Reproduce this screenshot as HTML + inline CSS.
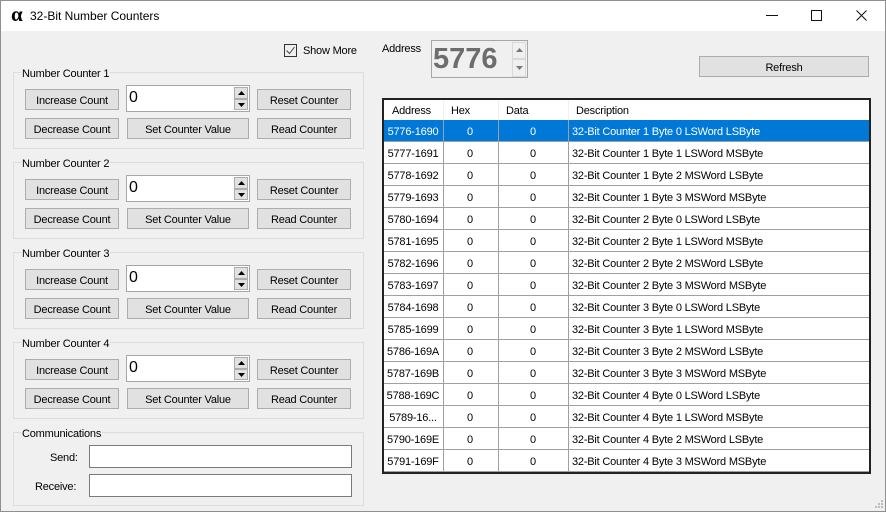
<!DOCTYPE html>
<html><head><meta charset="utf-8">
<style>
html,body{margin:0;padding:0;background:#fff}
#w{position:relative;width:886px;height:512px;overflow:hidden;background:#f0f0f0;font:11px/14px "Liberation Sans",sans-serif;letter-spacing:-.2px;color:#000}
#w div,#w span,#w svg{position:absolute}
.frame{left:0;top:0;width:884px;height:510px;border:1px solid #8f8f8f;box-sizing:content-box}
.tb{left:1px;top:1px;width:884px;height:30px;background:#fff}
.g{left:13px;width:349px;border:1px solid #dcdcdc;box-sizing:content-box}
.l{background:#f0f0f0;padding:0 1px;white-space:nowrap;line-height:14px;margin-top:1px}
.b{box-sizing:border-box;height:21px;border:1px solid #adadad;background:#e1e1e1;text-align:center;line-height:22px;white-space:nowrap}
.n{box-sizing:border-box;left:126px;width:124px;height:27px;border:1px solid #a6a6a6;background:#fff}
.n0{left:2px;top:3px;font-size:16px;line-height:18px;letter-spacing:0}
.s{box-sizing:border-box;left:107px;width:14px;border:1px solid #adadad;background:#e1e1e1}
.s svg{left:3px;top:3px}
.t{box-sizing:border-box;left:89px;width:263px;height:23px;border:1px solid #7a7a7a;background:#fff}
.tab{left:382px;top:98px;width:489px;height:376px;border:2px solid #222;box-sizing:border-box;background:#fff}
.h{top:4px;white-space:nowrap}
.ch{top:0;width:1px;height:20px;background:#f0f0f0}
.cv{top:20px;width:1px;height:352px;background:#a0a0a0}
.r{left:0;width:485px;height:22px;border-bottom:1px solid #a0a0a0;box-sizing:border-box;white-space:nowrap}
.a{left:-1px;width:60px;text-align:center;top:5px}
.x{left:58px;width:56px;text-align:center;top:5px}
.d{left:114px;width:70px;text-align:center;top:5px}
.e{left:188px;top:5px}
.sel{background:#0078d7;color:#fff}
</style></head><body>
<div id="w">
<div class="tb"></div>
<div class="frame"></div>
<div style="left:11px;top:3px;font:bold 21px/22px 'Liberation Serif',serif;letter-spacing:0">α</div>
<div style="left:30px;top:9px;font-size:12px;letter-spacing:0">32-Bit Number Counters</div>
<svg style="left:766px;top:14px" width="12" height="2"><rect width="12" height="1" y="1" fill="#111"/></svg>
<svg style="left:811px;top:10px" width="11" height="11"><rect x=".5" y=".5" width="10" height="10" fill="none" stroke="#111"/></svg>
<svg style="left:856px;top:10px" width="11" height="11"><path d="M.5.5l10 10M10.5.5l-10 10" stroke="#111" fill="none"/></svg>

<svg style="left:284px;top:44px" width="14" height="14"><rect x=".5" y=".5" width="12" height="12" fill="#f0f0f0" stroke="#333"/><path d="M2.5 6.5l3 3 5-6.5" fill="none" stroke="#444"/></svg>
<div style="left:303px;top:44px">Show More</div>
<div style="left:382px;top:42px">Address</div>

<div style="left:431px;top:40px;width:97px;height:38px;box-sizing:border-box;border:1px solid #a6a6a6;background:#f0f0f0"></div>
<div style="left:433px;top:42px;font:bold 29px/34px 'Liberation Sans',sans-serif;color:#6d6d6d;letter-spacing:0">5776</div>
<div style="left:512px;top:42px;width:14px;height:17px;box-sizing:border-box;border:1px solid #d9d9d9"></div>
<div style="left:512px;top:59px;width:14px;height:18px;box-sizing:border-box;border:1px solid #d9d9d9"></div>
<svg style="left:516px;top:48px" width="7" height="4"><path d="M3.5 0L7 4H0z" fill="#777"/></svg>
<svg style="left:516px;top:66px" width="7" height="4"><path d="M0 0H7L3.5 4z" fill="#777"/></svg>
<div class="b" style="left:699px;top:56px;width:170px">Refresh</div>

<!-- Counter 1 -->
<div class="g" style="top:72px;height:75px"></div><div class="l" style="left:21px;top:66px">Number Counter 1</div>
<div class="b" style="left:25px;top:89px;width:94px">Increase Count</div>
<div class="b" style="left:25px;top:118px;width:94px">Decrease Count</div>
<div class="b" style="left:127px;top:118px;width:122px">Set Counter Value</div>
<div class="b" style="left:257px;top:89px;width:94px">Reset Counter</div>
<div class="b" style="left:257px;top:118px;width:94px">Read Counter</div>
<div class="n" style="top:85px"><span class="n0">0</span><div class="s" style="top:1px;height:12px"><svg width="7" height="4"><path d="M3.5 0L7 4H0z"/></svg></div><div class="s" style="top:13px;height:11px"><svg width="7" height="4"><path d="M0 0H7L3.5 4z"/></svg></div></div>

<!-- Counter 2 -->
<div class="g" style="top:162px;height:75px"></div><div class="l" style="left:21px;top:156px">Number Counter 2</div>
<div class="b" style="left:25px;top:179px;width:94px">Increase Count</div>
<div class="b" style="left:25px;top:208px;width:94px">Decrease Count</div>
<div class="b" style="left:127px;top:208px;width:122px">Set Counter Value</div>
<div class="b" style="left:257px;top:179px;width:94px">Reset Counter</div>
<div class="b" style="left:257px;top:208px;width:94px">Read Counter</div>
<div class="n" style="top:175px"><span class="n0">0</span><div class="s" style="top:1px;height:12px"><svg width="7" height="4"><path d="M3.5 0L7 4H0z"/></svg></div><div class="s" style="top:13px;height:11px"><svg width="7" height="4"><path d="M0 0H7L3.5 4z"/></svg></div></div>

<!-- Counter 3 -->
<div class="g" style="top:252px;height:75px"></div><div class="l" style="left:21px;top:246px">Number Counter 3</div>
<div class="b" style="left:25px;top:269px;width:94px">Increase Count</div>
<div class="b" style="left:25px;top:298px;width:94px">Decrease Count</div>
<div class="b" style="left:127px;top:298px;width:122px">Set Counter Value</div>
<div class="b" style="left:257px;top:269px;width:94px">Reset Counter</div>
<div class="b" style="left:257px;top:298px;width:94px">Read Counter</div>
<div class="n" style="top:265px"><span class="n0">0</span><div class="s" style="top:1px;height:12px"><svg width="7" height="4"><path d="M3.5 0L7 4H0z"/></svg></div><div class="s" style="top:13px;height:11px"><svg width="7" height="4"><path d="M0 0H7L3.5 4z"/></svg></div></div>

<!-- Counter 4 -->
<div class="g" style="top:342px;height:75px"></div><div class="l" style="left:21px;top:336px">Number Counter 4</div>
<div class="b" style="left:25px;top:359px;width:94px">Increase Count</div>
<div class="b" style="left:25px;top:388px;width:94px">Decrease Count</div>
<div class="b" style="left:127px;top:388px;width:122px">Set Counter Value</div>
<div class="b" style="left:257px;top:359px;width:94px">Reset Counter</div>
<div class="b" style="left:257px;top:388px;width:94px">Read Counter</div>
<div class="n" style="top:355px"><span class="n0">0</span><div class="s" style="top:1px;height:12px"><svg width="7" height="4"><path d="M3.5 0L7 4H0z"/></svg></div><div class="s" style="top:13px;height:11px"><svg width="7" height="4"><path d="M0 0H7L3.5 4z"/></svg></div></div>

<!-- Communications -->
<div class="g" style="top:432px;height:72px"></div><div class="l" style="left:21px;top:426px">Communications</div>
<div style="left:50px;top:451px">Send:</div>
<div style="left:35px;top:480px">Receive:</div>
<div class="t" style="top:445px"></div>
<div class="t" style="top:474px"></div>

<!-- Table -->
<div class="tab">
<span class="h" style="left:8px">Address</span>
<span class="h" style="left:67px">Hex</span>
<span class="h" style="left:122px">Data</span>
<span class="h" style="left:192px">Description</span>
<div class="r sel" style="top:20px"><span class="a">5776-1690</span><span class="x">0</span><span class="d">0</span><span class="e">32-Bit Counter 1 Byte 0 LSWord LSByte</span></div>
<div class="r" style="top:42px"><span class="a">5777-1691</span><span class="x">0</span><span class="d">0</span><span class="e">32-Bit Counter 1 Byte 1 LSWord MSByte</span></div>
<div class="r" style="top:64px"><span class="a">5778-1692</span><span class="x">0</span><span class="d">0</span><span class="e">32-Bit Counter 1 Byte 2 MSWord LSByte</span></div>
<div class="r" style="top:86px"><span class="a">5779-1693</span><span class="x">0</span><span class="d">0</span><span class="e">32-Bit Counter 1 Byte 3 MSWord MSByte</span></div>
<div class="r" style="top:108px"><span class="a">5780-1694</span><span class="x">0</span><span class="d">0</span><span class="e">32-Bit Counter 2 Byte 0 LSWord LSByte</span></div>
<div class="r" style="top:130px"><span class="a">5781-1695</span><span class="x">0</span><span class="d">0</span><span class="e">32-Bit Counter 2 Byte 1 LSWord MSByte</span></div>
<div class="r" style="top:152px"><span class="a">5782-1696</span><span class="x">0</span><span class="d">0</span><span class="e">32-Bit Counter 2 Byte 2 MSWord LSByte</span></div>
<div class="r" style="top:174px"><span class="a">5783-1697</span><span class="x">0</span><span class="d">0</span><span class="e">32-Bit Counter 2 Byte 3 MSWord MSByte</span></div>
<div class="r" style="top:196px"><span class="a">5784-1698</span><span class="x">0</span><span class="d">0</span><span class="e">32-Bit Counter 3 Byte 0 LSWord LSByte</span></div>
<div class="r" style="top:218px"><span class="a">5785-1699</span><span class="x">0</span><span class="d">0</span><span class="e">32-Bit Counter 3 Byte 1 LSWord MSByte</span></div>
<div class="r" style="top:240px"><span class="a">5786-169A</span><span class="x">0</span><span class="d">0</span><span class="e">32-Bit Counter 3 Byte 2 MSWord LSByte</span></div>
<div class="r" style="top:262px"><span class="a">5787-169B</span><span class="x">0</span><span class="d">0</span><span class="e">32-Bit Counter 3 Byte 3 MSWord MSByte</span></div>
<div class="r" style="top:284px"><span class="a">5788-169C</span><span class="x">0</span><span class="d">0</span><span class="e">32-Bit Counter 4 Byte 0 LSWord LSByte</span></div>
<div class="r" style="top:306px"><span class="a">5789-16...</span><span class="x">0</span><span class="d">0</span><span class="e">32-Bit Counter 4 Byte 1 LSWord MSByte</span></div>
<div class="r" style="top:328px"><span class="a">5790-169E</span><span class="x">0</span><span class="d">0</span><span class="e">32-Bit Counter 4 Byte 2 MSWord LSByte</span></div>
<div class="r" style="top:350px"><span class="a">5791-169F</span><span class="x">0</span><span class="d">0</span><span class="e">32-Bit Counter 4 Byte 3 MSWord MSByte</span></div>
<div class="ch" style="left:59px"></div><div class="ch" style="left:114px"></div><div class="ch" style="left:184px"></div>
<div class="cv" style="left:59px"></div><div class="cv" style="left:114px"></div><div class="cv" style="left:184px"></div>
</div>

<svg style="left:874px;top:500px" width="10" height="10" fill="#bdbdbd"><rect x="7" y="0" width="2" height="2"/><rect x="4" y="3" width="2" height="2"/><rect x="7" y="3" width="2" height="2"/><rect x="1" y="6" width="2" height="2"/><rect x="4" y="6" width="2" height="2"/><rect x="7" y="6" width="2" height="2"/></svg>
</div>
</body></html>
